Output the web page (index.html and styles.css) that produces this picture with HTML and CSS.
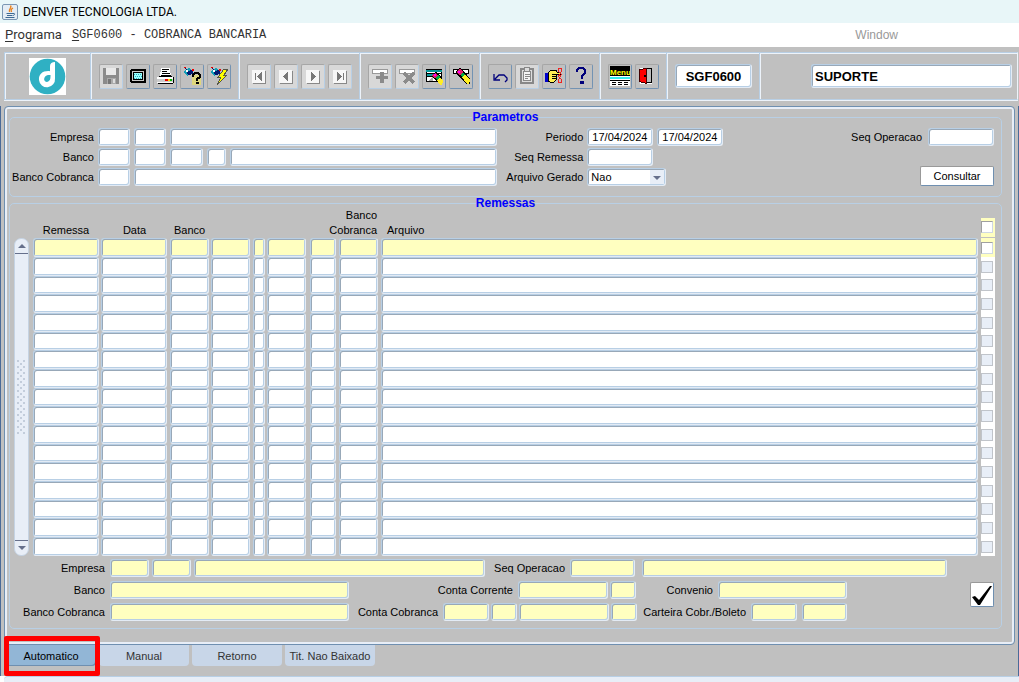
FILE: index.html
```html
<!DOCTYPE html>
<html lang="pt-BR">
<head>
<meta charset="utf-8">
<meta name="viewport" content="width=device-width, initial-scale=1">
<title>DENVER TECNOLOGIA LTDA.</title>
<link rel="stylesheet" href="styles.css">
</head>
<body>
<header class="titlebar">
  <svg class="java" viewBox="0 0 16 16" aria-hidden="true">
    <rect x=".5" y=".5" width="15" height="15" rx="1.5" fill="#e4edf5" stroke="#7b97b4"/>
    <path d="M8.500 1.500C10.500 4 6 5 7.500 8M11 4C8.500 5.500 9 6 9.500 8" fill="none" stroke="#e8821e" stroke-width="1.400"/>
    <path d="M4.500 9.500h6.500M5 11.500h5.500M3.500 13.500h9M11 9.500c2.500-.5 2 1.500 0 2" fill="none" stroke="#3d6a94"/>
  </svg>
  <span>DENVER TECNOLOGIA LTDA.</span>
</header>
<nav class="menubar">
  <button class="menu"><u>P</u>rograma</button>
  <button class="menu mono"><u>S</u>GF0600 - COBRANCA BANCARIA</button>
  <button class="menu window">Window</button>
</nav>
<div class="toolbar">
  <div class="group brand">
    <svg viewBox="0 0 37 37" role="img" aria-label="Denver">
      <rect width="37" height="37" fill="#fff"/>
      <circle cx="18.500" cy="18.500" r="17.800" fill="#2fb0c3"/>
      <path d="M26 4v16.500a8 8 0 0 1-16 1.500c-.5-6 4-9.500 11-8.800V8c0-2.500 2-4 5-4z" fill="#fff"/>
      <path d="M21.500 17c-4-.5-6.500 1.500-6.300 4.500.3 3 4.300 3.500 5.800 0 .5-1.300.5-3 .5-4.500z" fill="#2fb0c3"/>
    </svg>
  </div>
  <div class="group">
    <button class="tool off" aria-label="Salvar"><svg viewBox="0 0 20 20"><path d="M2 2h15l1 1v15H2z" fill="#8b8b8b"/><path d="M5 2h10v7H5z" fill="#e9e9e9"/><path d="M6 12h9v6H6z" fill="#aaa"/><path d="M7 13h3v5H7z" fill="#777"/><path d="M12 13h2v4h-2z" fill="#ddd"/></svg></button>
    <button class="tool" aria-label="Tela"><svg viewBox="0 0 20 20"><path d="M3 3h14l1 1v12l-1 1H3l-1-1V4z"/><path d="M4 5h12v10H4z" fill="#c8c8c8"/><path d="M5 6h10v8H5z"/><path d="M6 7h8v6H6z" fill="#9ff"/><path d="M6 8.500h8M7 10.500h7M6 12.500h8" stroke="#3ab" stroke-dasharray="1 1"/></svg></button>
    <button class="tool" aria-label="Imprimir"><svg viewBox="0 0 20 20"><path d="M6 2h9l1 9H5z" fill="#fff"/><path d="M7 3.500h7M7 5.500h5M7 7.500h8M6 9.500h10" stroke="#000"/><path d="M2 11h16v6H2z" fill="#fff"/><path d="M2 13h16v3H2z" fill="#ccc"/><path d="M4 10.500h13M18.500 11v6M3 17.500h15" stroke="#000"/><path d="M10 13h3v2h-3z" fill="#e00"/><path d="M13 13h2v2h-2z" fill="#fd0"/><path d="M15 13h2v2h-2z" fill="#0b0"/></svg></button>
    <button class="tool" aria-label="Ajuda da consulta"><svg viewBox="0 0 20 20"><path d="M10 9h9v10h-9z" fill="#ddd67c"/><path d="M1 6l6-4 4 4-6 4z" fill="#12a0b8"/><path d="M3 2l4 3 4-2v5L6 9z" fill="#001a70"/><path d="M4 4h2v2H4z" fill="#fff"/><path d="M2 1h2v1H2zM10 3h2v2h-2z" fill="#e00"/><path d="M11 11V9l2-2h3l2 2v2l-3 2v2" fill="none" stroke="#000" stroke-width="2"/><path d="M14 16h3v2h-3z"/></svg></button>
    <button class="tool" aria-label="Executar consulta"><svg viewBox="0 0 20 20"><path d="M1 6l6-4 4 4-6 4z" fill="#12a0b8"/><path d="M3 2l4 3 4-2v5L6 9z" fill="#001a70"/><path d="M4 4h2v2H4z" fill="#fff"/><path d="M2 1h2v1H2zM10 3h2v2h-2z" fill="#e00"/><path d="M15 3h4l-4 6h3L8 19l4-8H9z" fill="#ff0" stroke="#554"/></svg></button>
  </div>
  <div class="group">
    <button class="tool off" aria-label="Primeiro"><svg viewBox="0 0 20 20"><path d="M3 4h13v13H3z" fill="#f7f7f7"/><path d="M4 17.500h12.500V5" fill="none" stroke="#888"/><path d="M6 7h1v7H6zM13 6v9L8 10.500z" fill="#777"/></svg></button>
    <button class="tool off" aria-label="Anterior"><svg viewBox="0 0 20 20"><path d="M3 4h13v13H3z" fill="#f7f7f7"/><path d="M4 17.500h12.500V5" fill="none" stroke="#888"/><path d="M12 6v9L7 10.500z" fill="#777"/></svg></button>
    <button class="tool off" aria-label="Proximo"><svg viewBox="0 0 20 20"><path d="M3 4h13v13H3z" fill="#f7f7f7"/><path d="M4 17.500h12.500V5" fill="none" stroke="#888"/><path d="M8 6v9l5-4.500z" fill="#777"/></svg></button>
    <button class="tool off" aria-label="Ultimo"><svg viewBox="0 0 20 20"><path d="M3 4h13v13H3z" fill="#f7f7f7"/><path d="M4 17.500h12.500V5" fill="none" stroke="#888"/><path d="M13 7h1v7h-1zM7 6v9l5-4.500z" fill="#777"/></svg></button>
  </div>
  <div class="group tight">
    <button class="tool off" aria-label="Inserir"><svg viewBox="0 0 20 20"><path d="M2.500 3.500h15v4h-15z" fill="#fff" stroke="#999"/><path d="M10 6h4v4h4v3h-4v4h-4v-4H6v-3h4z" fill="#8b8b8b"/></svg></button>
    <button class="tool off" aria-label="Excluir"><svg viewBox="0 0 20 20"><path d="M2.500 3.500h15v4h-15z" fill="#fff" stroke="#999"/><path d="M7 7l10 10M17 7L7 17" stroke="#8b8b8b" stroke-width="3"/></svg></button>
    <button class="tool" aria-label="Limpar registro"><svg viewBox="0 0 20 20"><path d="M2.500 3.500h15v12h-15z" fill="#fff" stroke="#000"/><path d="M2 4h16v2H2zM3 8h9v2H3z" fill="#07989a"/><path d="M3 7h14v1H3zM3 10h7v1H3z"/><path d="M4 15l5-4v4z" fill="#aaa"/><path d="M9 8l3-2 6 6 1 5-3 2-8-8z"/><path d="M9 8l3-1 2 3-3 2-3-2z" fill="#e11c65"/><path d="M10 8h2v2h-2z" fill="#f0f"/><path d="M11 12l3-3 2 2-3 3z" fill="#0a4"/><path d="M13 14l3-3 3 4-1 4h-2z" fill="#fe2"/></svg></button>
    <button class="tool" aria-label="Limpar campo"><svg viewBox="0 0 20 20"><path d="M2.500 3.500h15v4h-15z" fill="#fff" stroke="#000"/><path d="M5 5l4-3 4 3 6 8v5h-3L5 8z"/><path d="M6 5l3-2 3 3-3 3-3-2z" fill="#e11c65"/><path d="M7 5h2v2H7z" fill="#f0f"/><path d="M9 9l3-3 2 3-3 2z" fill="#0a4"/><path d="M11 11l3-2 5 5-1 4h-2z" fill="#fe2"/></svg></button>
  </div>
  <div class="group tight">
    <button class="tool" aria-label="Desfazer"><svg viewBox="0 0 20 20"><path d="M4 8v6h6M5 13l4-4h5l3 3v2l-2 2" fill="none" stroke="#00007b" stroke-width="1.300" shape-rendering="auto"/></svg></button>
    <button class="tool off" aria-label="Colar"><svg viewBox="0 0 20 20"><path d="M4 3h12v14H4z" fill="#ddd" stroke="#888" stroke-width="1.500"/><path d="M6.500 5.500h7v9h-7z" fill="#f4f4f4" stroke="#888"/><path d="M7.500 1.500h5v4h-5z" fill="#ddd" stroke="#888"/><path d="M8 8.500h5M8 10.500h5M8 12.500h3" stroke="#888"/></svg></button>
    <button class="tool" aria-label="Lista de valores"><svg viewBox="0 0 20 20"><path d="M1 7h3v9H1z" fill="#00c"/><path d="M4 7l3-3h5l1 2h3v2h-4v6l-2 2H6l-2-1z" fill="#fe5" stroke="#000"/><path d="M8 8.500h5M8 10.500h5M8 12.500h4" stroke="#000"/><path d="M14.500 2.500h3v3l-3 5 3 3v3h-3v-3l3-5-3-3z" fill="none" stroke="#e22"/></svg></button>
    <button class="tool" aria-label="Ajuda"><svg viewBox="0 0 20 20"><path d="M6 6V4l2-2h4l2 2v3l-3 3v3" fill="none" stroke="#00007b" stroke-width="2.600"/><path d="M9 15h4v3H9z" fill="#00007b"/></svg></button>
  </div>
  <div class="group">
    <button class="tool" aria-label="Menu"><svg viewBox="0 0 20 20"><path d="M0 0h20v10H0z"/><text x="0" y="9" class="menu-text">Menu</text><path d="M0 10h20v10H0z" fill="#fff"/><path d="M0 11h20v2H0z" fill="#3ee"/><path d="M0 14.500h20M2 16.500h4M8 16.500h4M14 16.500h4M2 18.500h4M8 18.500h4M14 18.500h4" stroke="#000"/></svg></button>
    <button class="tool" aria-label="Sair"><svg viewBox="0 0 20 20"><path d="M3 2h12v16H3z" fill="#fff"/><path d="M9.500 2.500h5v14h-5z" fill="#bbb" stroke="#000"/><path d="M2.500 3.500l7-1v15l-7-2z" fill="#f00" stroke="#400"/><path d="M7 9h2v2H7z"/></svg></button>
  </div>
  <div class="group"><input class="field big code" aria-label="Programa atual" value="SGF0600"></div>
  <div class="group user"><input class="field big" aria-label="Usuario" value="SUPORTE"></div>
</div>
<main class="frame">
  <div class="panel">
    <fieldset class="box params">
      <legend>Parametros</legend>
      <div class="param-grid">
        <div class="stack">
          <div class="row"><label class="l84" for="emp">Empresa</label><input id="emp" class="field w32"><input class="field w32" aria-label="Filial"><input class="field grow" aria-label="Nome da empresa"></div>
          <div class="row"><label class="l84" for="ban">Banco</label><input id="ban" class="field w32"><input class="field w32" aria-label="Agencia"><input class="field w33" aria-label="Conta"><input class="field w19" aria-label="Digito"><input class="field grow" aria-label="Nome do banco"></div>
          <div class="row"><label class="l84" for="cob">Banco Cobranca</label><input id="cob" class="field w32"><input class="field grow" aria-label="Nome do banco de cobranca"></div>
        </div>
        <div class="stack">
          <div class="row"><label class="l77" for="per">Periodo</label><input id="per" class="field w66 date" value="17/04/2024"><input class="field w66 date" aria-label="Periodo final" value="17/04/2024"></div>
          <div class="row"><label class="l77" for="seq">Seq Remessa</label><input id="seq" class="field w66"></div>
          <div class="row"><label class="l77" for="ger">Arquivo Gerado</label><span class="select"><select id="ger" class="field"><option>Nao</option><option>Sim</option></select></span></div>
        </div>
        <div class="side">
          <div class="row"><label for="ope">Seq Operacao</label><input id="ope" class="field w66"></div>
          <button class="push">Consultar</button>
        </div>
      </div>
    </fieldset>
    <fieldset class="box results">
      <legend>Remessas</legend>
      <div class="list">
        <div class="scroll"><button aria-label="Subir"></button><i class="grip"></i><button class="down" aria-label="Descer"></button></div>
        <table class="grid">
          <colgroup><col class="c68"><col class="c69"><col class="c41"><col class="c42"><col class="c14"><col class="c43"><col class="c29"><col class="c42"><col><col class="c14"></colgroup>
          <thead><tr><th>Remessa</th><th>Data</th><th class="start" colspan="4">Banco</th><th class="end" colspan="2">Banco<br>Cobranca</th><th class="start file">Arquivo</th><th class="all"><span><input type="checkbox" aria-label="Marcar todos"></span></th></tr></thead>
          <tbody id="rows"></tbody>
        </table>
      </div>
      <div class="detail">
        <div class="stack">
          <div class="row"><label class="l95" for="d1">Empresa</label><input id="d1" class="field y w39"><input class="field y w39" aria-label="Filial"><input class="field y grow" aria-label="Nome da empresa"><label class="gap6" for="d2">Seq Operacao</label><input id="d2" class="field y w65"><input class="field y w305" aria-label="Descricao da operacao"></div>
          <div class="row short"><label class="l95" for="d3">Banco</label><input id="d3" class="field y grow"><label class="l162" for="d4">Conta Corrente</label><input id="d4" class="field y w90"><input class="field y w26" aria-label="Digito da conta"><label class="l75" for="d5">Convenio</label><input id="d5" class="field y w129"></div>
          <div class="row short"><label class="l95" for="d6">Banco Cobranca</label><input id="d6" class="field y grow"><label class="l87" for="d7">Conta Cobranca</label><input id="d7" class="field y w46"><input class="field y w26" aria-label="Digito da agencia"><input class="field y w90" aria-label="Conta de cobranca"><input class="field y w26" aria-label="Digito da conta de cobranca"><label class="l107" for="d8">Carteira Cobr./Boleto</label><input id="d8" class="field y w46"><input class="field y w45 last" aria-label="Boleto"></div>
        </div>
        <button class="push check" aria-label="Confirmar"><svg viewBox="0 0 22 22"><path d="M1 13l3-1 4 4L19 2h2L9 21H7z" fill="#000"/></svg></button>
      </div>
    </fieldset>
  </div>
  <nav class="tabs">
    <button class="tab on">Automatico</button><button class="tab">Manual</button><button class="tab">Retorno</button><button class="tab">Tit. Nao Baixado</button>
    <i class="mark"></i>
  </nav>
</main>
<footer class="status"></footer>
<script src="script.js"></script>
</body>
</html>
```
FILE: styles.css
```css
*, ::before, ::after { box-sizing: border-box; }
body {
  margin: 0;
  background: #fff;
  color: #000;
  font: 11px/14px "Liberation Sans", Arial, sans-serif;
}
button, input, select { font: inherit; color: inherit; margin: 0; }
button { padding: 0; border: 0; background: none; }

.titlebar {
  display: flex;
  align-items: center;
  gap: 5px;
  height: 23px;
  padding-left: 2px;
  background: #e8f6f8;
  font: 12px/16px Roboto, "Noto Sans", sans-serif;
}
.java { width: 16px; height: 16px; }
.menubar {
  display: flex;
  align-items: center;
  height: 24px;
  padding-left: 5px;
  color: #333;
}
.menu { font: 13px/16px Roboto, "Liberation Sans", sans-serif; }
.menu u { text-underline-offset: 2px; }
.mono { margin-left: 10px; font: 12px/16px "Liberation Mono", monospace; }
.window { margin-left: auto; margin-right: 121px; color: #999; font: 12px/16px "Liberation Sans", sans-serif; }

.toolbar {
  display: flex;
  padding: 5px 1px 6px 4px;
  background: #c0c0c0;
}
.group {
  display: flex;
  align-items: center;
  gap: 3px;
  height: 48px;
  padding: 0 7px 0 8px;
  border: solid #b8cfe5;
  border-width: 1px 0 1px 1px;
  box-shadow: inset 1px 1px #edf3fa, 0 1px #edf3fa;
}
.tight { padding-right: 6px; }
.brand { width: 86px; justify-content: center; padding: 0; }
.brand svg { width: 37px; height: 37px; }
.user { flex: 1; justify-content: flex-end; padding-right: 5px; border-right: 1px solid #edf3fa; }
.tool {
  display: flex;
  align-items: center;
  justify-content: center;
  width: 24px;
  height: 25px;
  border: 1px solid;
  border-color: #a6a6a6 #7393b3 #7393b3 #a6a6a6;
  border-radius: 2px;
}
.tool svg { width: 20px; height: 20px; shape-rendering: crispEdges; }
.menu-text { fill: #ff0; font: bold 8px "Liberation Sans", Arial, sans-serif; }
.off { background: #d8d8d8; border-color: #a6a6a6 #b8cfe5 #b8cfe5 #a6a6a6; }

.field {
  min-width: 0;
  height: 18px;
  padding: 0 4px;
  border: 1px solid;
  border-color: #b8cfe5 #e3ebf5 #e3ebf5 #b8cfe5;
  border-radius: 3px;
  background: #fff;
  box-shadow: inset 1px 1px #98a8b8, inset -1px -1px #b8cfe5;
  outline: 0;
}
.y { background: #ffffc0; }
.big { width: 201px; height: 24px; padding: 0 3px; font-weight: bold; font-size: 13px; line-height: 20px; }
.code { width: 77px; text-align: center; }

.frame {
  padding: 0 3px;
  border: solid #4a6a98;
  border-width: 0 1px;
  background: #c0c0c0;
}
.panel {
  padding: 6px 12px 15px 4px;
  border: 1px solid #6f8fb0;
  border-radius: 4px;
  box-shadow: inset 0 0 0 2px #e8eef7;
}
.box {
  min-width: 0;
  margin: 0;
  padding: 6px 0 10px;
  border: 1px solid #b8cfe5;
  border-radius: 5px;
}
.box legend {
  margin: 0 auto;
  padding: 0;
  color: #00f;
  font-weight: bold;
  font-size: 12px;
  line-height: 9px;
}
.param-grid {
  display: grid;
  grid-template-columns: 488fr 217px 262fr;
  gap: 9px;
  padding-right: 7px;
}
.stack { display: grid; gap: 2px; min-width: 0; }
.row { display: flex; align-items: center; gap: 4px; min-width: 0; }
.row label { flex: none; text-align: right; white-space: nowrap; }
.row .field { flex: none; }
.row .grow { flex: 1; }
.select { position: relative; width: 79px; height: 18px; }
.select select { width: 100%; padding: 0 3px; appearance: none; display: block; }
.select::before {
  content: "";
  position: absolute;
  top: 2px; right: 2px; bottom: 2px;
  width: 14px;
  background: #e8eef7;
  pointer-events: none;
}
.select::after {
  content: "";
  position: absolute;
  top: 8px; right: 5px;
  border: 4px solid transparent;
  border-top-color: #66708c;
  border-bottom: 0;
  pointer-events: none;
}
.side { display: flex; flex-direction: column; align-items: flex-end; justify-content: space-between; }
.side .row { gap: 6px; }
.push {
  width: 74px;
  height: 20px;
  border: 1px solid;
  border-color: #999 #6f8fb0 #6f8fb0 #999;
  border-radius: 2px;
  background: #fff;
}

.results { margin-top: 2px; padding: 0 0 7px; }
.list { display: flex; gap: 4px; padding: 0 6px 0 4px; }
.scroll {
  display: flex;
  flex-direction: column;
  justify-content: space-between;
  align-items: center;
  width: 15px;
  margin-top: 30px;
  border: 1px solid #c5d3e3;
  border-radius: 7px;
  background: #e8eef7;
}
.scroll button { width: 13px; height: 15px; border-bottom: 1px solid #66708c; }
.scroll button::before {
  content: "";
  display: block;
  width: 8px;
  margin: auto;
  border: 4px solid transparent;
  border-top: 0;
  border-bottom-color: #66708c;
}
.scroll .down { border-top: 1px solid #66708c; border-bottom: 0; }
.scroll .down::before { border-top: 4px solid #66708c; border-bottom: 0; }
.grip {
  width: 9px;
  height: 74px;
  background: radial-gradient(circle at 1px 1px, #c3cddb 1px, transparent 1px) 0 0 / 6px 6px, radial-gradient(circle at 1px 1px, #c3cddb 1px, transparent 1px) 3px 3px / 6px 6px;
}
.grid { flex: 1; width: 100%; table-layout: fixed; border-collapse: collapse; }
.grid th { height: 30px; padding: 0 2px 0 0; font-weight: normal; line-height: 15px; vertical-align: bottom; }
.grid .start { padding-left: 4px; text-align: left; }
.grid .file { padding-left: 6px; }
.grid .end { padding-right: 4px; text-align: right; }
.grid td { height: 19px; padding: 0 3px 0 0; line-height: 0; }
.grid tr:nth-child(3n) td { height: 18px; }
.grid tr:nth-child(3n) .field { height: 18px; }
.grid .field { display: block; width: 100%; height: 19px; }
.grid .t2 { padding-right: 2px; }
.grid .t4 { padding-right: 4px; }
.c14 { width: 14px; } .c29 { width: 29px; } .c41 { width: 41px; } .c42 { width: 42px; }
.c43 { width: 43px; } .c68 { width: 68px; } .c69 { width: 69px; }
.grid .all { padding: 0; }
.all span { display: block; height: 20px; padding-top: 3px; border-bottom: 1px solid #c0c0c0; background: #ffffc0; }
.grid .pick { padding: 0; background: #fff; }
.grid tr:first-child .pick { background: #ffffc0; }
[type="checkbox"] {
  appearance: none;
  display: block;
  width: 12px;
  height: 12px;
  border: 1px solid;
  border-color: #a0a0a0 #cfd8e4 #cfd8e4 #a0a0a0;
  background: #fff;
}
[type="checkbox"]:disabled { background: #e8eef7; border-color: #c0c4ca; }

.detail { display: flex; align-items: flex-end; justify-content: space-between; padding: 3px 7px 0 0; }
.detail .stack { flex: 1; gap: 4px; margin-right: 23px; }
.detail .row { gap: 3px; }
.detail label { margin-right: 2px; }
.detail .short { padding-right: 100px; gap: 2px; }
.detail .short label { margin-right: 3px; }
.detail .gap6 { margin-left: 6px; }
.detail .w305 { margin-left: 4px; }
.detail .last { margin-left: 3px; }
.check { width: 24px; height: 25px; margin-bottom: 14px; }
.check svg { display: block; width: 22px; height: 22px; }
.w19 { width: 19px; } .w26 { width: 26px; } .w32 { width: 32px; } .w33 { width: 33px; }
.w39 { width: 39px; } .w45 { width: 45px; } .w46 { width: 46px; } .w65 { width: 65px; }
.w66 { width: 66px; } .w90 { width: 90px; } .w129 { width: 129px; } .w305 { width: 305px; }
.l75 { width: 75px; } .l77 { width: 77px; } .l84 { width: 84px; } .l87 { width: 87px; }
.l95 { width: 95px; } .l107 { width: 107px; } .l162 { width: 162px; }

.tabs { position: relative; display: flex; gap: 3px; height: 31px; padding-left: 2px; }
.tab {
  width: 90px;
  height: 21px;
  border-radius: 0 0 4px 4px;
  background: #c8d6e8;
  color: #333;
}
.on { background: #92b6d6; color: #000; box-shadow: inset -1px -1px #6f8fb0; }
.mark {
  position: absolute;
  top: -9px;
  left: 0;
  width: 96px;
  height: 40px;
  border: 5px solid #f00;
  border-radius: 2px;
  pointer-events: none;
}
.status {
  height: 6px;
  margin-left: 4px;
  border-top: 1px solid #b8cfe5;
  border-radius: 4px 0 0 0;
  background: #e8eef7;
}
```
FILE: script.js
```js
const columns = [
  ["Remessa", "t2"], ["Data", ""], ["Banco", "t2"], ["Agencia", ""], ["Digito", "t2"],
  ["Conta", "t4"], ["Banco Cobranca", ""], ["Agencia Cobranca", ""], ["Arquivo", ""]
];
const body = document.getElementById("rows");
for (let i = 0; i < 17; i++) {
  const cells = columns.map(([name, cls]) =>
    `<td class="${cls}"><input class="field${i === 0 ? " y" : ""}" aria-label="${name} ${i + 1}"></td>`).join("");
  body.insertAdjacentHTML("beforeend",
    `<tr>${cells}<td class="pick"><input type="checkbox" aria-label="Marcar ${i + 1}"${i ? " disabled" : ""}></td></tr>`);
}
```
